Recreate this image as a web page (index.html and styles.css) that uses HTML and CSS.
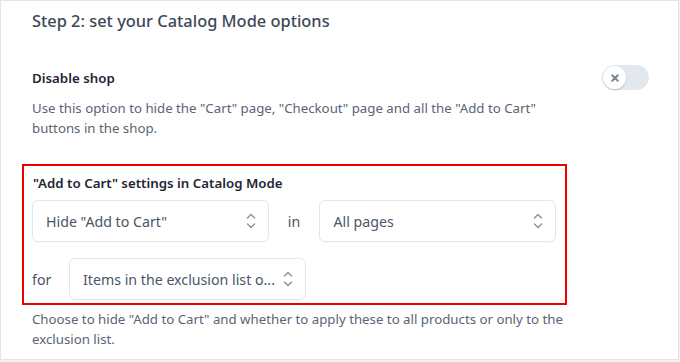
FILE: index.html
```html
<!DOCTYPE html>
<html>
<head>
<meta charset="utf-8">
<link rel="stylesheet" href="styles.css">
</head>
<body>
<div class="card">
  <h2 class="title">Step 2: set your Catalog Mode options</h2>
  <div class="option">
    <div class="option-head">
      <span class="label">Disable shop</span>
      <span class="toggle"><span class="knob"><svg width="10" height="10" viewBox="0 0 10 10"><path d="M2.2 2.2L7.8 7.8M7.8 2.2L2.2 7.8" stroke="#7b8799" stroke-width="2" stroke-linecap="round"/></svg></span></span>
    </div>
    <p class="desc">Use this option to hide the "Cart" page, "Checkout" page and all the "Add to Cart" buttons in the shop.</p>
  </div>
  <div class="highlight">
    <div class="label">"Add to Cart" settings in Catalog Mode</div>
    <div class="row">
      <div class="select"><span class="val">Hide "Add to Cart"</span><svg class="chev" width="10" height="16" viewBox="0 0 10 16"><path d="M1.5 5L5 1.5L8.5 5M1.5 11L5 14.5L8.5 11" fill="none" stroke="#8592a6" stroke-width="1.4" stroke-linecap="round" stroke-linejoin="round"/></svg></div>
      <span class="word in">in</span>
      <div class="select"><span class="val">All pages</span><svg class="chev" width="10" height="16" viewBox="0 0 10 16"><path d="M1.5 5L5 1.5L8.5 5M1.5 11L5 14.5L8.5 11" fill="none" stroke="#8592a6" stroke-width="1.4" stroke-linecap="round" stroke-linejoin="round"/></svg></div>
    </div>
    <div class="row row2">
      <span class="word for">for</span>
      <div class="select"><span class="val">Items in the exclusion list o...</span><svg class="chev" width="10" height="16" viewBox="0 0 10 16"><path d="M1.5 5L5 1.5L8.5 5M1.5 11L5 14.5L8.5 11" fill="none" stroke="#8592a6" stroke-width="1.4" stroke-linecap="round" stroke-linejoin="round"/></svg></div>
    </div>
  </div>
  <p class="desc bottom">Choose to hide "Add to Cart" and whether to apply these to all products or only to the exclusion list.</p>
</div>
</body>
</html>
```
FILE: styles.css
```css
html, body {
  margin: 0;
  padding: 0;
  background: #f0f0f1;
}
body {
  font-family: "Noto Sans", "Open Sans", sans-serif;
  width: 680px;
  height: 362px;
  overflow: hidden;
}
.card {
  box-sizing: border-box;
  width: 679px;
  height: 360px;
  background: #fff;
  border: 1px solid #e3e4e6;
  padding: 7px 30px 0 31px;
}
.title {
  margin: 0;
  font-size: 16.4px;
  font-weight: 500;
  color: #3c4858;
  line-height: 26px;
}
.option {
  margin-top: 31px;
}
.option-head {
  display: flex;
  justify-content: space-between;
  align-items: center;
}
.label {
  font-size: 13.3px;
  font-weight: 600;
  color: #1e2633;
  line-height: 20px;
}
.toggle {
  width: 47px;
  height: 25px;
  border-radius: 13px;
  background: #e3e8ef;
  display: flex;
  align-items: center;
  padding-left: 1px;
  box-sizing: border-box;
  margin-right: -1px;
}
.knob {
  width: 23px;
  height: 23px;
  border-radius: 50%;
  background: #fff;
  box-shadow: 0 1px 2px rgba(0,0,0,0.18);
  display: flex;
  align-items: center;
  justify-content: center;
}
.desc {
  margin: 9px 0 0;
  font-size: 13.25px;
  line-height: 19.5px;
  color: #5a6474;
  max-width: 540px;
}
.highlight {
  box-sizing: border-box;
  width: 545px;
  margin: 26px 0 0 -10px;
  border: 2px solid #ee0000;
  padding: 7px 9px 3px 8px;
}
.highlight > .label {
  padding-left: 1px;
}
.row {
  display: flex;
  align-items: center;
  margin-top: 7px;
}
.row2 {
  margin-top: 16px;
}
.select {
  box-sizing: border-box;
  width: 237px;
  height: 42px;
  border: 1px solid #e2e6ee;
  border-radius: 6px;
  display: flex;
  align-items: center;
  justify-content: space-between;
  padding: 0 12px 0 13px;
  font-size: 14.2px;
  color: #4a5566;
  box-shadow: 0 1px 1px rgba(0,0,0,0.03);
}
.val {
  white-space: nowrap;
}
.word {
  font-size: 14.2px;
  color: #4a5566;
}
.in {
  width: 51px;
  text-align: center;
}
.for {
  width: 37px;
}
.bottom {
  margin-top: 5px;
}
```
